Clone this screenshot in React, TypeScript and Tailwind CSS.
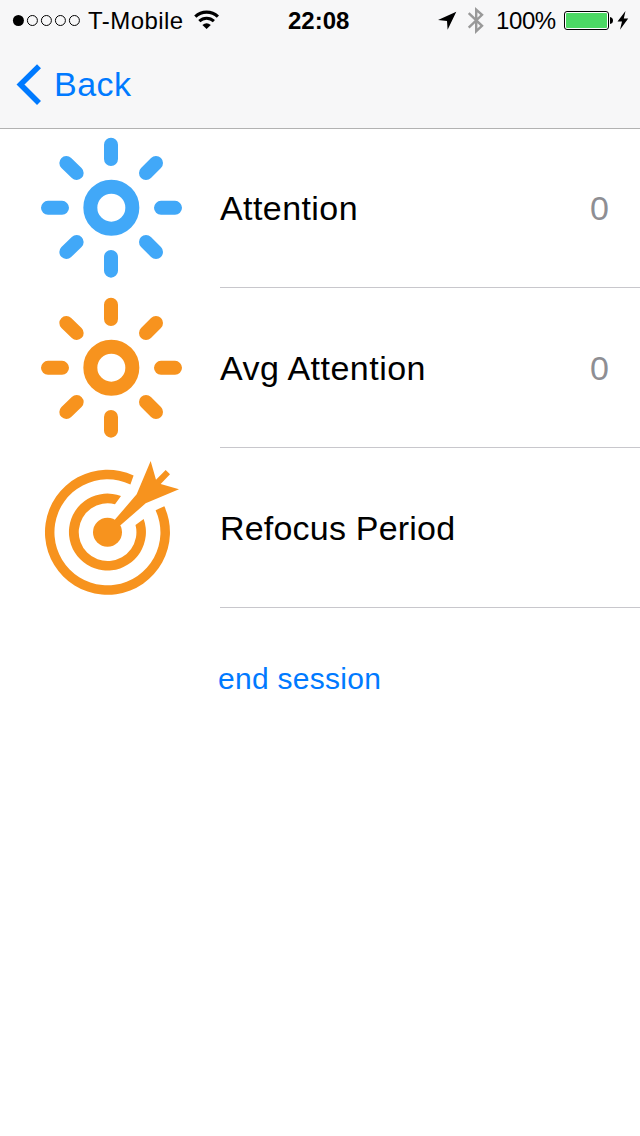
import React from "react";

function SunIcon({ className }: { className: string }) {
  return (
    <svg className={`h-40 w-[170px] shrink-0 ${className}`} viewBox="0 -6 510 480" fill="none" stroke="currentColor" strokeWidth="42" strokeLinecap="round">
      <circle cx="244" cy="233" r="63" />
      <path d="M243 44V87M243 381V422M54 233.500H96M393 233.500H435M109 99L140 129M378 99L348 129M140 336L109 366M348 336L378 366" />
    </svg>
  );
}

function TargetIcon() {
  return (
    <svg className="h-40 w-[170px] shrink-0 text-[#f7931e]" viewBox="0 -6 510 480" fill="currentColor">
      <path d="M310.800 76.500A187.500 187.500 0 1 0 403 169L376.800 180.500A159 159 0 1 1 301.200 103.600Z" />
      <path d="M273 138A115.500 115.500 0 1 0 341 207L316.500 225A86.500 86.500 0 1 1 255 163Z" />
      <circle cx="232.500" cy="247" r="43.500" />
      <path d="M253 211L320 133L362 33L378 89L407 60L420 73L392 102L447 118L347 160L268 229Z" />
    </svg>
  );
}

function StatusBar() {
  return (
    <div className="flex h-10 items-center text-2xl leading-10 text-black">
      <svg className="ml-3 h-10 w-[70px] shrink-0" viewBox="12 0 70 40" fill="none" stroke="#000">
        <circle cx="18.400" cy="20.500" r="5.500" fill="#000" stroke="none" />
        <circle cx="32.400" cy="20.500" r="5" />
        <circle cx="46.400" cy="20.500" r="5" />
        <circle cx="60.400" cy="20.500" r="5" />
        <circle cx="74.400" cy="20.500" r="5" />
      </svg>
      <span className="ml-[6px] w-[104px] shrink-0 whitespace-nowrap pt-[2px] tracking-[0.45px]">T-Mobile</span>
      <svg className="h-10 w-[30px] shrink-0" viewBox="192 0 30 40" fill="none" stroke="#000">
        <path d="M195.300 16.700A16.500 16.500 0 0 1 217.900 16.700" strokeWidth="3.200" />
        <path d="M199.300 21.200A10.500 10.500 0 0 1 213.900 21.200" strokeWidth="3" />
        <path d="M206.600 29L202.400 25A6.500 6.500 0 0 1 210.800 25Z" fill="#000" stroke="none" />
      </svg>
      <span className="ml-[66px] w-[150px] shrink-0 pt-[2px] font-bold">22:08</span>
      <svg className="h-10 w-[52px] shrink-0" viewBox="438 0 52 40">
        <path d="M456.300 11.700L447.600 29.800L447 21L438 20Z" fill="#000" />
        <path d="M468.700 13.200L482 25.800L476.200 31.200V9.600L482 14.800L468.700 27.600" fill="none" stroke="#999" strokeWidth="2.400" />
      </svg>
      <span className="ml-[6px] w-[68px] shrink-0 whitespace-nowrap pt-[2px] tracking-[-0.4px]">100%</span>
      <svg className="h-10 w-[68px] shrink-0" viewBox="564 0 68 40">
        <rect x="564.500" y="11.500" width="44" height="18" rx="2.500" fill="#fff" stroke="#000" />
        <rect x="566" y="13" width="41" height="15" rx="1" fill="#4cd964" />
        <path d="M610 17Q613 17.500 613 20.500Q613 23.500 610 24Z" fill="#000" />
        <path d="M625.500 11L617.500 21.500H622L620 29.800L628.200 18.600H623.800Z" fill="#000" />
      </svg>
    </div>
  );
}

function Row({ icon, label, value, spacing }: { icon: React.ReactNode; label: string; value?: string; spacing: string }) {
  return (
    <div className="flex h-40 pl-[30px]">
      {icon}
      <div className="ml-5 flex flex-1 items-center justify-between border-b border-[#c8c7cc] pr-[31px] pt-[2px] text-[34px]">
        <span className={spacing}>{label}</span>
        {value && <span className="text-[#8e8e93]">{value}</span>}
      </div>
    </div>
  );
}

export default function App() {
  return (
    <div className="h-[1136px] w-[640px] overflow-hidden bg-white font-['Liberation_Sans',sans-serif] text-black">
      <header className="relative h-32 bg-[#f7f7f8] shadow-[0_1px_0_#b2b2b2]">
        <StatusBar />
        <button className="flex h-[88px] items-center pl-4 text-[34px] text-[#007aff]">
          <svg className="h-11 w-[26px]" viewBox="16 62 26 44" fill="none" stroke="currentColor" strokeWidth="5.600">
            <path d="M39 66.200L20.500 84.500L39 103" />
          </svg>
          <span className="ml-3 tracking-[0.5px]">Back</span>
        </button>
      </header>
      <main>
        <Row icon={<SunIcon className="text-[#41a8f8]" />} label="Attention" value="0" spacing="tracking-[0.42px]" />
        <Row icon={<SunIcon className="text-[#f7931e]" />} label="Avg Attention" value="0" spacing="tracking-[0.48px]" />
        <Row icon={<TargetIcon />} label="Refocus Period" spacing="tracking-[0.2px]" />
        <button className="ml-[218px] mt-[53px] block text-[30px] leading-9 tracking-[0.28px] text-[#007aff]">end session</button>
      </main>
    </div>
  );
}
